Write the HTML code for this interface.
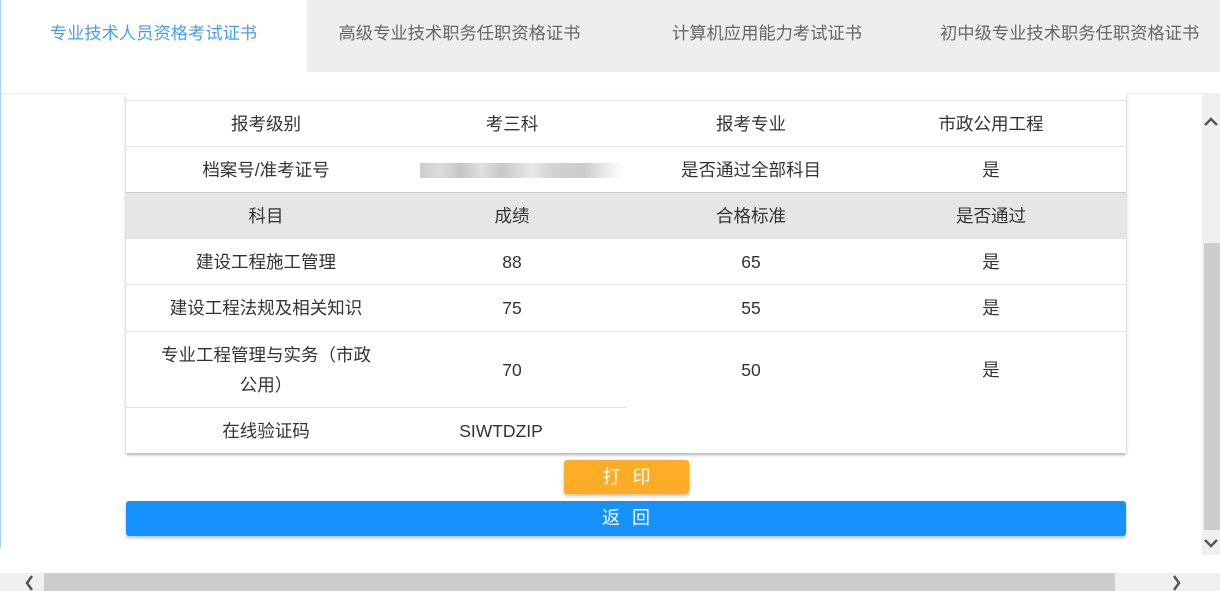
<!DOCTYPE html>
<html><head><meta charset="utf-8"><style>
*{margin:0;padding:0;box-sizing:border-box}
body{width:1220px;height:591px;overflow:hidden;background:#fff;font-family:"Liberation Sans","Noto Sans CJK SC",sans-serif;position:relative;color:#333}
.tabs{position:absolute;left:0;top:0;width:1220px;height:72px;background:#eeeeee}
.tab{position:absolute;top:0;height:72px;line-height:66px;font-size:17.3px;color:#666;text-align:center}
.lb{position:absolute;left:0;top:0;width:1px;height:548px;background:#a9d2f5}
.t{position:absolute;left:126px;width:1000px;background:#fff;box-shadow:0 2px 3px rgba(0,0,0,.3)}
.r{position:absolute;left:0;width:1000px;border-top:1px solid #e3e3e3}
.c{position:absolute;top:0;height:100%;display:flex;align-items:center;justify-content:center;text-align:center;font-size:17.5px;color:#333;line-height:30px}
.btn{position:absolute;color:#fff;font-size:18px;text-align:center;letter-spacing:12px;border-radius:3px;box-shadow:0 2px 3px rgba(0,0,0,.25)}
</style></head><body>
<div class="tabs">
<div class="tab" style="left:0;width:307px;background:#fff;color:#4a9ff0">专业技术人员资格考试证书</div>
<div class="tab" style="left:307px;width:305px">高级专业技术职务任职资格证书</div>
<div class="tab" style="left:627px;width:280px">计算机应用能力考试证书</div>
<div class="tab" style="left:907px;width:313px;text-align:left;padding-left:33px">初中级专业技术职务任职资格证书</div>
</div>
<div style="position:absolute;left:0;top:93px;width:1202px;height:1px;background:#ececec"></div>
<div class="lb"></div>
<div class="t" style="top:93px;height:360px">
<div class="r" style="top:7px;height:46px"><div class="c" style="left:0;width:280px">报考级别</div><div class="c" style="left:280px;width:212px">考三科</div><div class="c" style="left:500px;width:250px">报考专业</div><div class="c" style="left:740px;width:250px">市政公用工程</div></div>
<div class="r" style="top:53px;height:46px"><div class="c" style="left:0;width:280px">档案号/准考证号</div>
<div style="position:absolute;left:294px;top:16px;width:204px;height:15px;background:linear-gradient(90deg,#ccc,#ddd 10%,#c5c5c5 20%,#e0e0e0 30%,#c8c8c8 40%,#e8e8e8 55%,#d3d3d3 65%,#cbcbcb 80%,#e8e8e8 90%,#fff)"></div>
<div class="c" style="left:500px;width:250px">是否通过全部科目</div><div class="c" style="left:740px;width:250px">是</div></div>
<div class="r" style="top:99px;height:46px;background:#e6e6e6;border-top-color:#ccc"><div class="c" style="left:0;width:280px">科目</div><div class="c" style="left:280px;width:212px">成绩</div><div class="c" style="left:500px;width:250px">合格标准</div><div class="c" style="left:740px;width:250px">是否通过</div></div>
<div class="r" style="top:145px;height:46px"><div class="c" style="left:0;width:280px">建设工程施工管理</div><div class="c" style="left:280px;width:212px">88</div><div class="c" style="left:500px;width:250px">65</div><div class="c" style="left:740px;width:250px">是</div></div>
<div class="r" style="top:191px;height:47px"><div class="c" style="left:0;width:280px">建设工程法规及相关知识</div><div class="c" style="left:280px;width:212px">75</div><div class="c" style="left:500px;width:250px">55</div><div class="c" style="left:740px;width:250px">是</div></div>
<div class="r" style="top:238px;height:76px"><div class="c" style="left:30px;width:220px">专业工程管理与实务（市政公用）</div><div class="c" style="left:280px;width:212px">70</div><div class="c" style="left:500px;width:250px">50</div><div class="c" style="left:740px;width:250px">是</div></div>
<div class="r" style="top:314px;height:46px;width:500px"><div class="c" style="left:0;width:280px">在线验证码</div><div class="c" style="left:270px;width:210px">SIWTDZIP</div></div>
</div>
<div class="btn" style="left:564px;top:460px;width:125px;height:34px;line-height:34px;background:#ffad26;padding-left:12px">打印</div>
<div class="btn" style="left:126px;top:501px;width:1000px;height:35px;line-height:35px;background:#1592ff;padding-left:12px">返回</div>
<div style="position:absolute;left:1202px;top:93px;width:18px;height:462px;background:#f0f0f0"></div>
<div style="position:absolute;left:1204px;top:243px;width:16px;height:287px;background:#cdcdcd"></div>
<svg style="position:absolute;left:1202px;top:112px" width="18" height="18"><path d="M3 13 L9 7 L15 13" fill="none" stroke="#555" stroke-width="2.5"/></svg>
<svg style="position:absolute;left:1202px;top:535px" width="18" height="18"><path d="M3 5 L9 11 L15 5" fill="none" stroke="#555" stroke-width="2.5"/></svg>
<div style="position:absolute;left:0;top:573px;width:1220px;height:18px;background:#f0f0f0"></div>
<div style="position:absolute;left:44px;top:573px;width:1071px;height:18px;background:#cdcdcd"></div>
<svg style="position:absolute;left:20px;top:573px" width="18" height="18"><path d="M12 3 L7 10 L12 17" fill="none" stroke="#555" stroke-width="2.5"/></svg>
<svg style="position:absolute;left:1168px;top:573px" width="18" height="18"><path d="M6 3 L11 10 L6 17" fill="none" stroke="#555" stroke-width="2.5"/></svg>
</body></html>
